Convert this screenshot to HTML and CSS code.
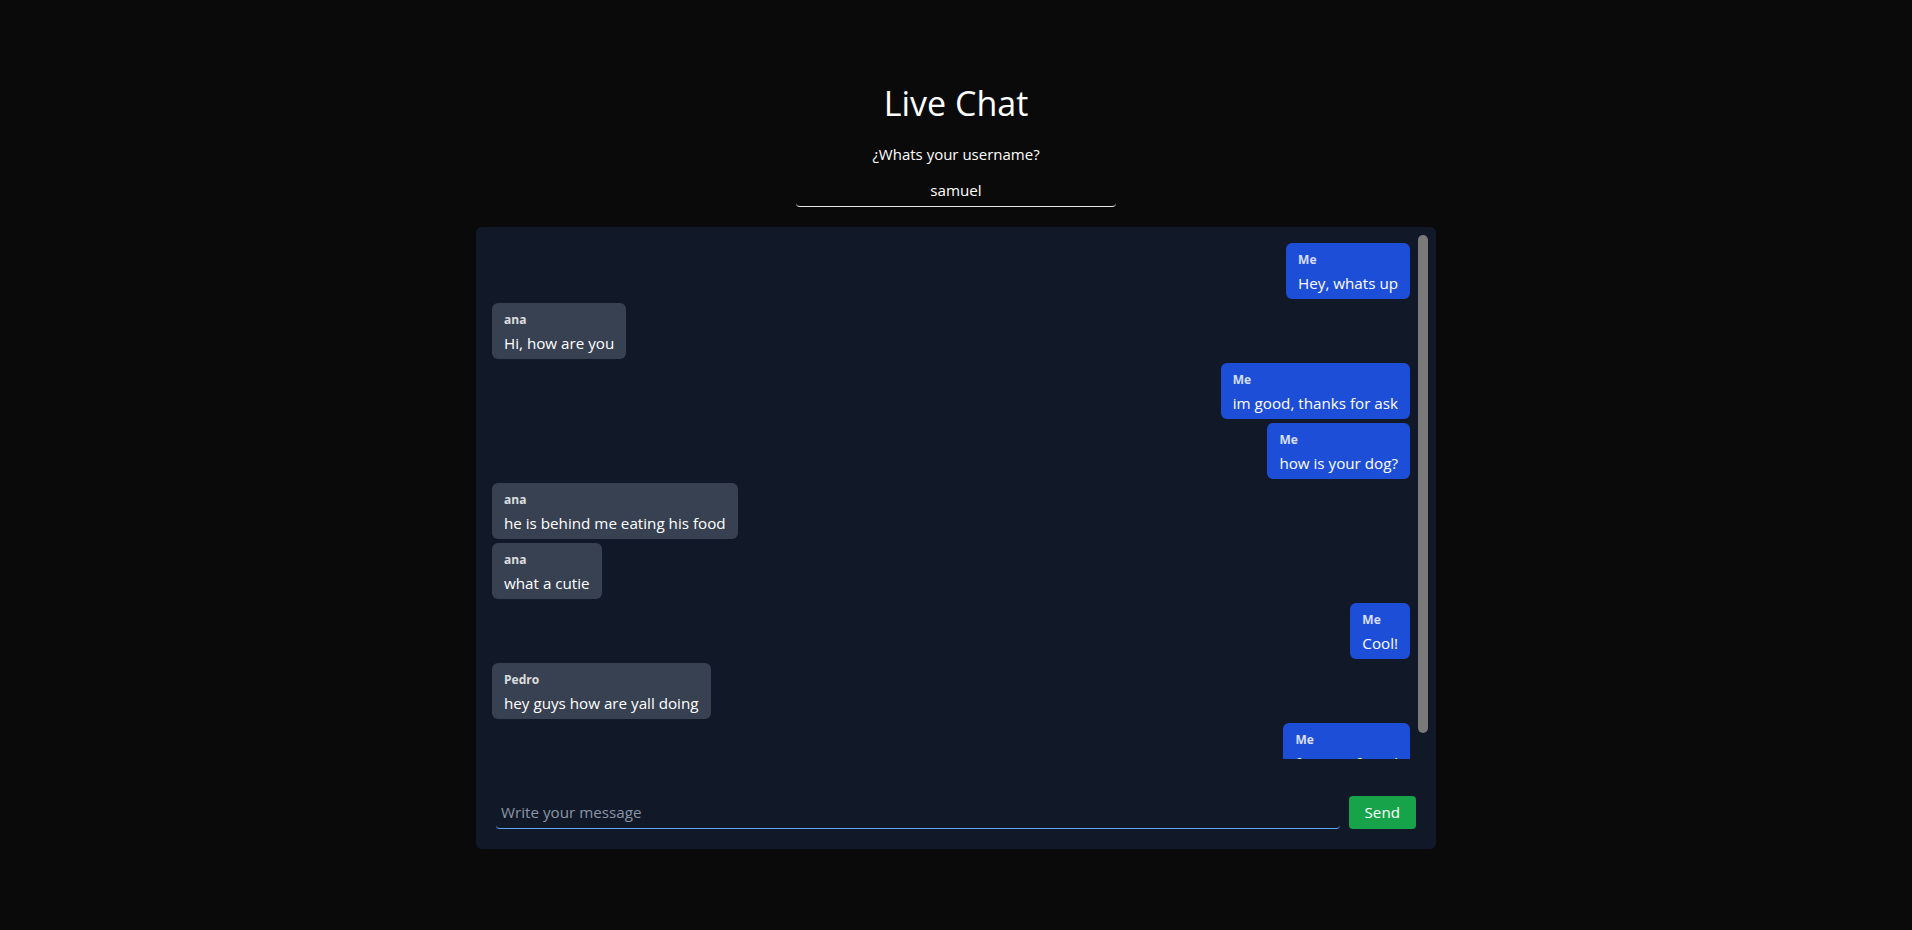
FILE: index.html
```html
<!DOCTYPE html>
<html lang="en">
<head>
<meta charset="utf-8">
<title>Live Chat</title>
<link rel="stylesheet" href="styles.css">
</head>
<body>
<main class="page">
  <h1 class="title">Live Chat</h1>
  <label class="caption" for="username">¿Whats your username?</label>
  <input class="username" id="username" type="text" value="samuel">
  <section class="card">
    <div class="messages">
      <div class="msg mine"><span class="author">Me</span><span class="text">Hey, whats up</span></div>
      <div class="msg other"><span class="author">ana</span><span class="text">Hi, how are you</span></div>
      <div class="msg mine"><span class="author">Me</span><span class="text">im good, thanks for ask</span></div>
      <div class="msg mine"><span class="author">Me</span><span class="text">how is your dog?</span></div>
      <div class="msg other"><span class="author">ana</span><span class="text">he is behind me eating his food</span></div>
      <div class="msg other"><span class="author">ana</span><span class="text">what a cutie</span></div>
      <div class="msg mine"><span class="author">Me</span><span class="text">Cool!</span></div>
      <div class="msg other"><span class="author">Pedro</span><span class="text">hey guys how are yall doing</span></div>
      <div class="msg mine"><span class="author">Me</span><span class="text">fine, my friend</span></div>
    </div>
    <div class="scroll-thumb"></div>
    <form class="composer">
      <input class="message-input" type="text" placeholder="Write your message">
      <button class="send" type="button">Send</button>
    </form>
  </section>
</main>
</body>
</html>
```
FILE: styles.css
```css
* { box-sizing: border-box; }
html, body { margin: 0; padding: 0; }
body {
  background: #0a0a0a;
  color: #ffffff;
  font-family: "Open Sans", "Noto Sans", sans-serif;
  font-size: 15.2px;
  line-height: 24px;
  min-height: 930px;
}
.page {
  display: flex;
  flex-direction: column;
  align-items: center;
  padding-top: 83px;
}
.title {
  margin: 0;
  font-size: 34px;
  line-height: 40px;
  font-weight: 400;
}
.caption {
  margin-top: 19px;
  font-size: 15px;
  line-height: 24px;
}
.username {
  margin-top: 8px;
  width: 320px;
  padding: 4px;
  background: transparent;
  border: none;
  border-bottom: 1px solid #e5e7eb;
  border-radius: 4px;
  color: #fff;
  font: inherit;
  text-align: center;
  outline: none;
}
.card {
  position: relative;
  margin-top: 20px;
  width: 960px;
  height: 622px;
  padding: 8px;
  background: #111827;
  border-radius: 6px;
  display: flex;
  flex-direction: column;
}
.messages {
  height: 524px;
  overflow-y: auto;
  scrollbar-width: none;
  padding: 8px 18px 8px 8px;
  display: flex;
  flex-direction: column;
  gap: 4px;
}
.scroll-thumb {
  position: absolute;
  top: 8px;
  right: 8px;
  width: 10px;
  height: 498px;
  border-radius: 5px;
  background: #7a7a7a;
}
.msg {
  display: flex;
  flex-direction: column;
  padding: 6px 12px 4px;
  border-radius: 6px;
  flex-shrink: 0;
}
.msg.mine { align-self: flex-end; background: #1d4ed8; }
.msg.other { align-self: flex-start; background: #374151; }
.author {
  font-size: 12px;
  line-height: 22px;
  font-weight: 700;
  opacity: 0.82;
}
.text { font-size: 15.2px; line-height: 24px; }
.composer {
  margin: 37px 0 0;
  padding: 0 12px;
  display: flex;
  align-items: flex-end;
  gap: 9px;
}
.message-input {
  flex: 1;
  padding: 4px 5px;
  background: transparent;
  border: none;
  border-bottom: 1px solid #60a5fa;
  border-radius: 4px;
  color: #fff;
  font: inherit;
  outline: none;
}
.message-input::placeholder { color: #8b95a5; }
.send {
  padding: 4px 16px 5px;
  background: #16a34a;
  color: #fff;
  border: none;
  border-radius: 4px;
  font: inherit;
  cursor: pointer;
}
```
